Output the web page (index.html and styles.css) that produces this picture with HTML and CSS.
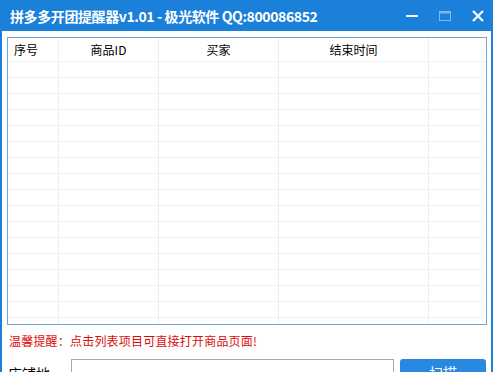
FILE: index.html
```html
<!DOCTYPE html>
<html>
	<head>
		<title>拼多多开团提醒器</title>
		<link rel="stylesheet" href="styles.css">
	</head>
	<body>
		<div id="win">
			<div class="titlebar">
				<span class="title">拼多多开团提醒器v1.01 - 极光软件 QQ:800086852</span>
				<div class="controls">
					<svg width="14" height="14" viewBox="0 0 14 14"><rect x="1" y="6" width="12" height="2" fill="#fff"/></svg>
					<svg width="14" height="14" viewBox="0 0 14 14"><rect x="1.5" y="2.5" width="11" height="9" fill="none" stroke="#7fb8ec"/><rect x="1.5" y="2.5" width="11" height="2" fill="#7fb8ec"/></svg>
					<svg width="14" height="14" viewBox="0 0 14 14"><path d="M2 2L12 12M12 2L2 12" stroke="#fff" stroke-width="2.2"/></svg>
				</div>
			</div>
			<div class="content">
				<div class="list">
					<div class="head">
						<div class="c1">序号</div>
						<div class="c2">商品ID</div>
						<div class="c3">买家</div>
						<div class="c4">结束时间</div>
						<div class="c5"></div>
					</div>
					<div class="body">
						<div class="col c1"></div>
						<div class="col c2"></div>
						<div class="col c3"></div>
						<div class="col c4"></div>
						<div class="col c5"></div>
					</div>
				</div>
				<div class="tip">温馨提醒：点击列表项目可直接打开商品页面!</div>
				<div class="shop">
					<span class="label">店铺地址：</span>
					<input type="text" class="url">
					<button class="scan">扫描</button>
				</div>
			</div>
		</div>
	</body>
</html>
```
FILE: styles.css
```css
body {
	margin: 0;
	font-family: "Noto Sans CJK SC", "DejaVu Sans", sans-serif;
	font-size: 12px;
	overflow: hidden;
}
#win {
	width: 489px;
	height: 372px;
	border-left: 2px solid #1a80da;
	border-right: 2px solid #1a80da;
	background: #fff;
	overflow: hidden;
}
.titlebar {
	height: 31px;
	background: #1a80da;
	display: flex;
	align-items: center;
	justify-content: space-between;
	padding-left: 8px;
}
.title {
	color: #fff;
	font-weight: bold;
	font-size: 14px;
	letter-spacing: -0.4px;
}
.controls {
	display: flex;
	gap: 19px;
	padding-right: 6px;
}
.content {
	padding: 6px 4px 0 5px;
}
.list {
	border: 1px solid #6ea6d6;
	height: 286px;
	display: flex;
	flex-direction: column;
}
.head, .body {
	display: grid;
	grid-template-columns: 51px 100px 120px 150px 1fr;
}
.head {
	height: 23px;
	border-bottom: 1px solid #f0f0f0;
}
.head div {
	border-right: 1px solid #eceff2;
	text-align: center;
	line-height: 23px;
	color: #000;
}
.head .c1 {
	text-align: left;
	padding-left: 6px;
}
.head .c5 {border-right: none;}
.body {
	flex: 1;
	margin-right: 5px;
}
.col {
	border-right: 1px solid #ededed;
	background: repeating-linear-gradient(to bottom, transparent 0, transparent 15px, #efefef 15px, #efefef 16px);
}
.col.c5 {border-right: none;}
.tip {
	color: #dc0c0c;
	margin-top: 8px;
	line-height: 16px;
	padding-left: 2px;
	letter-spacing: 0.2px;
}
.shop {
	display: flex;
	align-items: flex-start;
	margin-top: 10px;
	gap: 5px;
}
.label {
	font-size: 14px;
	padding-left: 1px;
	padding-top: 4px;
	width: 58px;
}
.url {
	width: 321px;
	height: 22px;
	border: 1px solid #a9a9a9;
	margin: 0;
	padding: 0;
}
.scan {
	width: 86px;
	height: 26px;
	background: #2988e0;
	border: none;
	border-radius: 3px;
	color: #fff;
	font-family: inherit;
	font-size: 14px;
	margin-left: 1px;
}
```
